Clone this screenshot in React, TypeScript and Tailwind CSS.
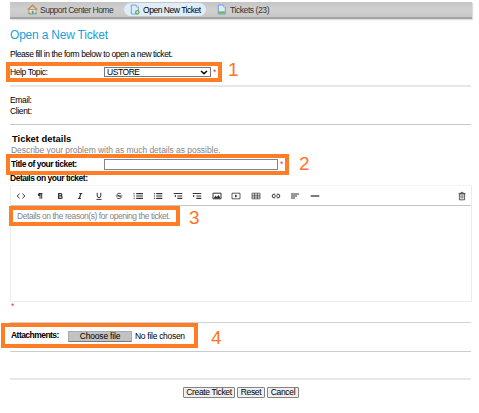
import React from "react";

type TextProps = { children: React.ReactNode; className?: string };

function Text({ children, className = "" }: TextProps) {
  return <span className={`whitespace-nowrap ${className}`}>{children}</span>;
}

function HomeIcon() {
  return (
    <svg width="11" height="11" viewBox="0 0 11 11">
      <path d="M2 5.5h7V10H2z" fill="#f3e6c0" stroke="#8b8f86" strokeWidth=".7" />
      <path d="M.7 5.8 5.5 1.3l4.8 4.5" fill="none" stroke="#d58a3c" strokeWidth="1.4" />
      <path d="M4.7 6.7h2V10h-2z" fill="#4c9cc9" />
      <path d="M1.5 8.7h2.2V10H1.5zM7.5 8.7h2V10h-2z" fill="#77a83f" />
    </svg>
  );
}

function PageIcon({ badge = false }: { badge?: boolean }) {
  return (
    <svg width="10" height="11" viewBox="0 0 10 11">
      <path d="M1.3 1h5l2 2v7h-7z" fill="#dcecff" stroke="#6b98cd" strokeWidth=".9" />
      <path d="M6.3 1v2h2" fill="#fff" stroke="#6b98cd" strokeWidth=".6" />
      {badge ? (
        <g>
          <circle cx="7.3" cy="8.2" r="2.3" fill="#65a650" />
          <path d="M7.3 6.9v2.6M6 8.2h2.6" stroke="#e5f5dd" strokeWidth=".8" />
        </g>
      ) : (
        <path d="M1.8 7.4h6v2.2h-6z" fill="#69b944" />
      )}
    </svg>
  );
}

function Tool({ children }: { children: React.ReactNode }) {
  return (
    <span className="flex h-[18px] w-[19.6px] shrink-0 items-center justify-center text-[#333]">
      <svg width="10" height="10" viewBox="0 0 10 10" fill="none" stroke="currentColor" strokeWidth="1">
        {children}
      </svg>
    </span>
  );
}

function Toolbar() {
  return (
    <div className="flex h-[20px] items-center border-b border-[#c6c6c6] pr-[1px]">
      <Tool><path d="M3.6 2.7 1.1 5l2.5 2.3M6.4 2.7 8.9 5 6.4 7.3" /></Tool>
      <Tool><path d="M5 2.2v5.6M6.7 2.2v5.6M3.8 2.5h3.5" /><circle cx="4.1" cy="3.7" r="1.3" fill="currentColor" stroke="none" /></Tool>
      <Tool><path d="M3.6 2.3v5.4M3.2 2.6h2.4a1.1 1.1 0 0 1 0 2.3H3.6h2.2a1.2 1.2 0 0 1 0 2.5H3.2" strokeWidth="1.2" /></Tool>
      <Tool><path d="M4.3 2.5h3M2.9 7.5h3M5.9 2.5 4.3 7.5" strokeWidth="1.2" /></Tool>
      <Tool><path d="M3.2 1.8v3a1.8 1.8 0 0 0 3.6 0v-3M2.5 8.4h5" /></Tool>
      <Tool><path d="M7 3c-.5-1-3.8-1.1-3.8.6C3.2 5 7 4.8 7 6.3c0 1.7-3.6 1.6-4.2.4M1.8 5h6.5" strokeWidth=".9" /></Tool>
      <Tool><path d="M3.2 2.7H10M3.2 5H10M3.2 7.3H10" strokeWidth="1.2" /><path d="M1 2v1.5M.5 5H2M.5 7.3H2" strokeWidth=".8" /></Tool>
      <Tool><path d="M3.2 2.7h6.1M3.2 5h6.1M3.2 7.3h6.1" strokeWidth="1.2" /><path d="M.9 2.7h1.2M.9 5h1.2M.9 7.3h1.2" /></Tool>
      <Tool><path d="M.7 2.5h8.6M4.3 5h5M4.3 7.3h5" strokeWidth="1.2" /><path d="M3 3.7 1.2 5 3 6.3z" fill="currentColor" stroke="none" /></Tool>
      <Tool><path d="M.7 2.5h8.6M4.3 5h5M4.3 7.3h5" strokeWidth="1.2" /><path d="m1 3.7 1.8 1.3L1 6.3z" fill="currentColor" stroke="none" /></Tool>
      <Tool><path d="M1 2.2h8v5.6H1z" /><path d="m1.5 7.5 2-3 1.3 1.6L6.5 4l2.2 3.5z" fill="currentColor" stroke="none" /></Tool>
      <Tool><path d="M1 2.2h8v5.6H1z" strokeWidth=".8" /><path d="m4 3.4 2.6 1.6L4 6.6z" fill="currentColor" stroke="none" /></Tool>
      <Tool><path d="M1 2.2h8v5.6H1zM3.6 2.2v5.6M6.4 2.2v5.6M1 4.2h8M1 6h8" strokeWidth=".7" /></Tool>
      <Tool><path d="M4.2 3.2H3a1.8 1.8 0 0 0 0 3.6h1.2M5.8 3.2H7a1.8 1.8 0 0 1 0 3.6H5.8M3.3 5h3.4" /></Tool>
      <Tool><path d="M1 3h8M1 5h6M1 7h4" strokeWidth="1.2" /></Tool>
      <Tool><path d="M.7 5h8.6" strokeWidth="1.3" /></Tool>
      <span className="-mr-[2px] ml-auto"><Tool><path d="M2.4 3h5.2v5.8H2.4zM1.5 2.4h7M3.7 1.4h2.6M4.1 4.1v3.4M5.9 4.1v3.4" strokeWidth=".8" /></Tool></span>
    </div>
  );
}

function Highlight({ className }: { className: string }) {
  return <div className={`pointer-events-none absolute border-4 border-[#ff7d24] ${className}`} />;
}

function Step({ children, className }: TextProps) {
  return <span className={`absolute text-[19px] leading-[20px] text-[#ff7424] ${className}`}>{children}</span>;
}

function Button({ children, className }: TextProps) {
  return (
    <button className={`flex h-[11px] items-center justify-center whitespace-nowrap rounded-[1px] border border-[#858585] bg-[#efefef] text-[8.5px] leading-none tracking-[-0.35px] ${className}`}>
      {children}
    </button>
  );
}

export default function App() {
  return (
    <main className="h-[413px] w-[479px] overflow-hidden bg-white pl-[10px] pr-[7px] pt-[2px] font-['Liberation_Sans',Arial,sans-serif] text-[8.5px] leading-[10px] text-black">
      <nav className="flex h-[17px] items-center border-b-2 border-[#a4a4a4] bg-linear-to-b from-[#c5c5c5] via-[#d0d0d0] to-[#c8c8c8] text-[#333] shadow-[1px_1px_1px_#ddd]">
        <div className="flex w-[113px] items-center gap-[2px] pl-[17px]"><HomeIcon /><Text className="tracking-[-0.5px]">Support Center Home</Text></div>
        <div className="ml-[1px] flex h-[13px] w-[82px] items-center gap-[3px] rounded-full bg-[#dfedf8] pl-[6px] text-black"><PageIcon badge /><Text className="tracking-[-0.47px]">Open New Ticket</Text></div>
        <div className="ml-[11px] flex items-center gap-[3px]"><PageIcon /><Text className="tracking-[-0.42px]">Tickets (23)</Text></div>
      </nav>
      <h1 className="mt-[8px] h-[16px] text-[12px] leading-[16px] text-[#1ba0da]"><Text className="tracking-[-0.2px]">Open a New Ticket</Text></h1>
      <p className="mt-[6px] h-[10px]"><Text className="tracking-[-0.42px]">Please fill in the form below to open a new ticket.</Text></p>
      <section className="relative mt-[3px] flex h-[23px] pt-[5px]">
        <Text className="w-[94px] tracking-[-0.4px]">Help Topic:</Text>
        <div className="flex h-[10px] w-[107px] items-center justify-between border border-[#777] pl-[2px] pr-[2px]">
          <Text className="tracking-[-0.45px]">USTORE</Text>
          <svg width="8" height="5" viewBox="0 0 8 5"><path d="m1 1 3 2.7L7 1" fill="none" stroke="#111" strokeWidth="1.6" /></svg>
        </div>
        <Text className="ml-[2px] text-[#f33]">*</Text>
        <Highlight className="left-[-4px] top-0 h-[20px] w-[216px]" />
        <Step className="left-[218px] top-[-2px]">1</Step>
      </section>
      <div className="mr-[1px] h-[2px] bg-[#e7e7e7]" />
      <section className="h-[37px] pt-[8px] leading-[10.5px] tracking-[-0.35px]"><p>Email:</p><p>Client:</p></section>
      <div className="mr-[1px] h-px bg-[#c5c7c7]" />
      <h2 className="ml-[2px] mt-[8px] h-[12px] text-[9.4px] font-bold leading-[12px]"><Text>Ticket details</Text></h2>
      <p className="ml-px h-[9px] text-[#858585]"><Text className="tracking-[-0.04px]">Describe your problem with as much details as possible.</Text></p>
      <section className="relative flex h-[20px] items-center">
        <Text className="w-[94px] pl-px font-bold tracking-[-0.49px]">Title of your ticket:</Text>
        <input aria-label="Title of your ticket" className="h-[11px] w-[174px] border border-[#85858f] bg-white" />
        <Text className="ml-[2px] text-[#f33]">*</Text>
        <Highlight className="left-[-4px] top-0 h-[21px] w-[283px]" />
        <Step className="left-[289px] top-0">2</Step>
      </section>
      <p className="h-[11px] font-bold leading-[9px]"><Text className="tracking-[-0.49px]">Details on your ticket:</Text></p>
      <section className="relative h-[117px] border border-t-[#f5f5f5] border-[#ececec]">
        <Toolbar />
        <p className="pl-[6px] pt-[5px] text-[#858585]"><Text className="tracking-[-0.43px]">Details on the reason(s) for opening the ticket.</Text></p>
        <Highlight className="left-[-2px] top-[20px] h-[20px] w-[171px]" />
        <Step className="left-[178px] top-[22px]">3</Step>
      </section>
      <p className="h-[20px] pl-px leading-[8px] text-[#f33]">*</p>
      <div className="mr-[1px] h-px bg-[#d2d2d2]" />
      <section className="relative flex h-[28px] pt-[8px]">
        <Text className="-mt-px w-[58px] pl-px font-bold tracking-[-0.54px]">Attachments:</Text>
        <button className="flex h-[11px] w-[64px] items-center justify-center border border-[#aaa] border-b-[#777] bg-[#c2c2c2] text-[8.5px] leading-none tracking-[-0.2px]">Choose file</button>
        <Text className="ml-[3px] tracking-[-0.29px]">No file chosen</Text>
        <Highlight className="left-[-9px] top-0 h-[25px] w-[197px]" />
        <Step className="left-[201px] top-[5px]">4</Step>
      </section>
      <div className="mr-[1px] h-px bg-[#ccc]" />
      <div className="mr-[1px] h-[28px] border-b-2 border-[#e7e7e7]" />
      <div className="ml-[173px] mt-[7px] flex gap-[2px]">
        <Button className="w-[52px]">Create Ticket</Button>
        <Button className="w-[28px]">Reset</Button>
        <Button className="w-[32px]">Cancel</Button>
      </div>
    </main>
  );
}
